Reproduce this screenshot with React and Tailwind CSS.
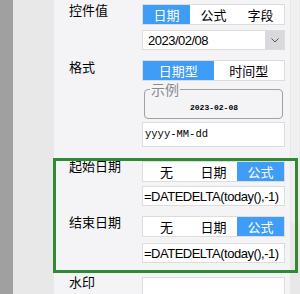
import React from 'react';

const cjk = { fontFamily: '"Noto Sans CJK SC", "Liberation Sans", sans-serif' };
const mono = { fontFamily: '"Liberation Mono", "DejaVu Sans Mono", monospace' };
const sans = { fontFamily: '"Liberation Sans", Arial, sans-serif' };

const Segmented = ({ items, active, className = '' }) => (
  <div className={`flex h-[21px] border border-[#dcdcdc] bg-white ${className}`}>
    {items.map((it, i) => (
      <div
        key={it}
        className={`flex-1 flex items-center justify-center text-[13px] leading-none ${
          i === active ? 'bg-[#3f9cf7] text-white' : 'text-black'
        }`}
      >
        {it}
      </div>
    ))}
  </div>
);

const Label = ({ children, className = '' }) => (
  <div className={`w-[88px] pl-[15px] text-[13px] leading-none text-black shrink-0 ${className}`}>{children}</div>
);

const FormulaInput = ({ className = '' }) => (
  <div
    className={`h-[20px] flex items-center pl-[1px] border border-[#dcdcdc] bg-white text-[13px] tracking-[-0.5px] leading-none text-black whitespace-nowrap overflow-hidden ${className}`}
    style={sans}
  >
    =DATEDELTA(today(),-1)
  </div>
);

export default function App() {
  return (
    <div className="relative w-[300px] h-[294px] flex overflow-hidden bg-[#f4f4f6]" style={cjk}>
      <div className="w-[13px] bg-[#a0a0a0] shrink-0" />
      <div className="w-[41px] bg-[#e8e8e8] shrink-0" />
      <div className="w-[231px] shrink-0 pt-[4px]">
        <div className="flex">
          <Label className="-mt-[1px]">控件值</Label>
          <div className="w-[143px]">
            <Segmented items={['日期', '公式', '字段']} active={0} />
            <div className="mt-[5px] h-[20px] flex border border-[#dcdcdc] bg-white">
              <div className="flex-1 flex items-center pl-[5px] text-[13px] tracking-[-0.5px] leading-none" style={sans}>
                2023/02/08
              </div>
              <div className="w-[19px] bg-[#d9d9dd] flex items-center justify-center">
                <svg width="8" height="5" viewBox="0 0 8 5" fill="none" stroke="#555" strokeWidth="1">
                  <path d="M0.5 0.5 L4 4 L7.5 0.5" />
                </svg>
              </div>
            </div>
          </div>
        </div>

        <div className="flex mt-[10px]">
          <Label className="pt-0">格式</Label>
          <div className="w-[143px]">
            <Segmented items={['日期型', '时间型']} active={0} />
            <fieldset className="mt-[1px] mx-[2px] h-[37px] border border-[#a0a0a0] rounded-[4px] pl-[5px] pr-[4px]">
              <legend className="px-[1px] text-[14px] leading-[14px] text-[#8a8a8a]">示例</legend>
              <div className="text-center text-[8px] font-bold leading-none pt-[8px] text-black" style={mono}>
                2023-02-08
              </div>
            </fieldset>
            <div className="mt-[3px] h-[25px] flex items-center pl-[2px] border border-[#dcdcdc] bg-white text-[10.5px] text-black" style={mono}>
              yyyy-MM-dd
            </div>
          </div>
        </div>

        <div className="flex mt-[14px]">
          <Label className="-mt-[2px]">起始日期</Label>
          <div className="w-[143px]">
            <Segmented items={['无', '日期', '公式']} active={2} className="h-[20px]" />
            <FormulaInput className="mt-[4px]" />
          </div>
        </div>

        <div className="flex mt-[10px]">
          <Label className="-mt-[1px]">结束日期</Label>
          <div className="w-[143px]">
            <Segmented items={['无', '日期', '公式']} active={2} className="h-[20px]" />
            <FormulaInput className="mt-[6px]" />
          </div>
        </div>

        <div className="flex mt-[14px]">
          <Label className="-mt-[2px]">水印</Label>
          <div className="w-[143px] h-[20px] border border-[#dcdcdc] bg-white" />
        </div>
      </div>
      <div className="w-[5px] shrink-0" />
      <div className="flex-1 bg-[#e8e8e8] relative">
        <div className="absolute left-[1px] top-0 w-[8px] h-[223px] rounded-b-[4px] bg-[#f0f0f0]" />
      </div>

      <div className="absolute left-[53px] top-[158px] w-[245px] h-[115px] border-[3px] border-[#2e8a33] pointer-events-none" />
    </div>
  );
}
